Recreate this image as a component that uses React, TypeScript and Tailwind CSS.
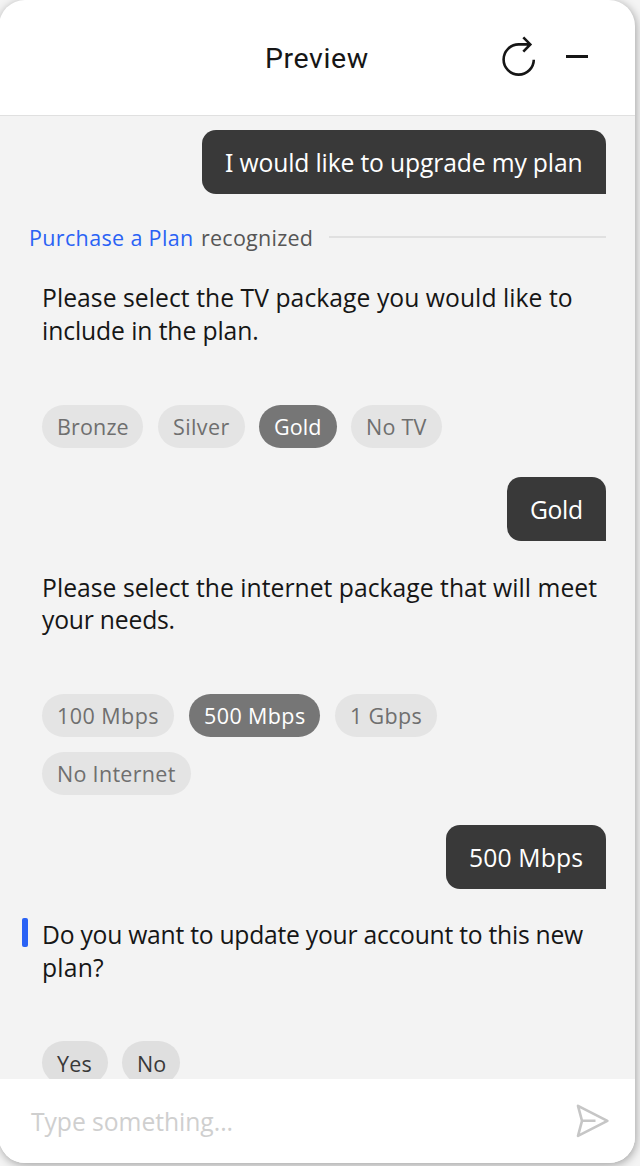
import React from "react";

type ChipProps = { label: string; size: string; tone?: "muted" | "selected" | "active" };

const tones = {
  muted: "bg-[#e4e4e4] text-[#6f6f6f] pt-px",
  selected: "bg-[#767676] text-white pt-px",
  active: "bg-[#dfdfdf] text-[#393939] pt-[3px]",
};

function Chip({ label, size, tone = "muted" }: ChipProps) {
  return (
    <button
      className={`flex h-[43px] shrink-0 items-center rounded-[22px] pl-[15px] text-[21.5px] leading-none whitespace-nowrap ${size} ${tones[tone]}`}
    >
      {label}
    </button>
  );
}

function UserBubble({ children, size }: { children: React.ReactNode; size: string }) {
  return (
    <div
      className={`flex h-16 shrink-0 items-center self-end rounded-[14px] rounded-br-none bg-[#393939] pl-[23px] pt-[3px] text-[24.7px] leading-none whitespace-nowrap text-white ${size}`}
    >
      {children}
    </div>
  );
}

function Line({ children, track }: { children: React.ReactNode; track: string }) {
  return <span className={`block whitespace-nowrap ${track}`}>{children}</span>;
}

export default function App() {
  return (
    <div className="h-[1166px] w-[640px] overflow-hidden bg-[#f4f4f4] font-['Open_Sans',sans-serif]">
      <main className="-ml-px flex h-[1163px] w-[636px] flex-col overflow-hidden rounded-[26px] bg-white pl-px shadow-[1px_2px_10px_rgba(0,0,0,0.35)]">
        <header className="flex h-[116px] shrink-0 items-center border-b border-[#e0e0e0]">
          <h1 className="ml-[265px] w-[233px] pt-[3px] font-['Roboto',sans-serif] text-[28.5px] leading-none font-normal tracking-[0.6px] text-[#161616]">
            Preview
          </h1>
          <button aria-label="Restart">
            <svg className="block" width="42" height="50" viewBox="498 33 42 50" fill="none" stroke="#161616" strokeWidth="2.6">
              <path d="M533.8 59.7A15.1 15.1 0 1 1 518.7 44.4H530.5M523.3 37.4L530.3 44.4L523.3 51.6" />
            </svg>
          </button>
          <button aria-label="Minimize" className="mb-[2px] ml-[26px] h-[3px] w-[22px] bg-[#161616]" />
        </header>

        <section className="flex h-[963px] shrink-0 flex-col overflow-hidden bg-[#f3f3f3] pt-[14px] pr-[29px]">
          <UserBubble size="w-[404px] tracking-[-0.15px]">
            <span>
              <span className="font-['Noto_Sans']">I</span> would like to upgrade my plan
            </span>
          </UserBubble>

          <div className="mt-[29px] flex h-[30px] shrink-0 items-center pl-[29px] text-[21.5px] leading-none whitespace-nowrap">
            <a className="w-[172px] tracking-[0.35px] text-[#2a62f5]">Purchase a Plan</a>
            <span className="w-[128px] tracking-[0.25px] text-[#565656]">recognized</span>
            <hr className="mb-[2px] h-[2px] w-[277px] border-0 bg-[#e0e0e0]" />
          </div>

          <p className="mt-[29px] h-[66px] shrink-0 pl-[42px] text-[24.7px] leading-[32.7px] text-[#161616]">
            <Line track="tracking-[0.05px]">Please select the TV package you would like to</Line>
            <Line track="tracking-[-0.1px]">include in the plan.</Line>
          </p>
          <div className="mt-[57px] flex shrink-0 pl-[42px]">
            <Chip label="Bronze" size="w-[101px] mr-[15px] tracking-[0.15px]" />
            <Chip label="Silver" size="w-[87px] mr-[14px] tracking-[0.4px]" />
            <Chip label="Gold" size="w-[78px] mr-[14px] tracking-[0.1px]" tone="selected" />
            <Chip label="No TV" size="w-[91px] tracking-[0.25px]" />
          </div>

          <div className="mt-[29px] flex shrink-0 flex-col">
            <UserBubble size="w-[99px] tracking-[-0.35px]">Gold</UserBubble>
          </div>
          <p className="mt-[31px] h-[66px] shrink-0 pl-[42px] text-[24.7px] leading-[32px] text-[#161616]">
            <Line track="tracking-[0.03px]">Please select the internet package that will meet</Line>
            <Line track="tracking-[-0.2px]">your needs.</Line>
          </p>
          <div className="mt-[56px] flex shrink-0 flex-wrap gap-y-[15px] pl-[42px]">
            <Chip label="100 Mbps" size="w-[132px] mr-[15px] tracking-[0.45px]" />
            <Chip label="500 Mbps" size="w-[131px] mr-[15px] tracking-[0.4px]" tone="selected" />
            <Chip label="1 Gbps" size="w-[102px] mr-[60px] tracking-[0.35px]" />
            <Chip label="No Internet" size="w-[149px] tracking-[0.3px]" />
          </div>

          <div className="mt-[30px] flex shrink-0 flex-col">
            <UserBubble size="w-[160px] tracking-[0.15px]">500 Mbps</UserBubble>
          </div>
          <div className="mt-[29px] flex shrink-0 pl-[22px]">
            <span className="h-[29px] w-[6px] rounded-[2px] bg-[#2a62f5]" />
            <p className="mt-px ml-[14px] h-[66px] text-[24.7px] leading-[32.7px] text-[#161616]">
              <Line track="tracking-[-0.25px]">Do you want to update your account to this new</Line>
              <Line track="tracking-[0.2px]">plan?</Line>
            </p>
          </div>
          <div className="mt-[56px] flex shrink-0 pl-[42px]">
            <Chip label="Yes" size="w-[66px] mr-[14px] tracking-[0.2px]" tone="active" />
            <Chip label="No" size="w-[58px]" tone="active" />
          </div>
        </section>

        <footer className="flex h-[84px] shrink-0 items-center bg-white">
          <span className="ml-[31px] w-[541px] pt-[3px] text-[24.7px] leading-none tracking-[-0.05px] text-[#cfcfcf]">Type something...</span>
          <button aria-label="Send">
            <svg className="block" width="42" height="42" viewBox="572 1100 42 42" fill="none" stroke="#c6c6c6" strokeWidth="2.6" strokeLinejoin="round">
              <path d="M578 1105.8L607.4 1120.8L578 1135.8L582 1120.8ZM582 1120.8H595.5" />
            </svg>
          </button>
        </footer>
      </main>
    </div>
  );
}
